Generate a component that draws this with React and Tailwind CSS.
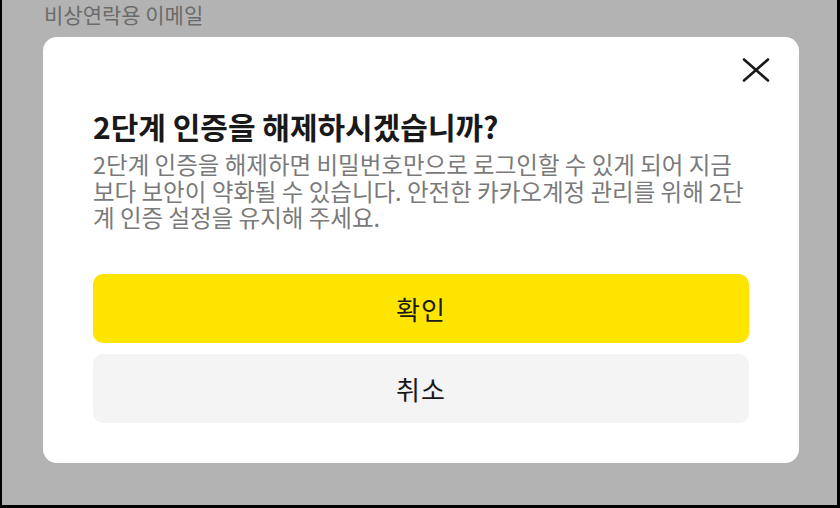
export default function App() {
  const font = { fontFamily: '"Noto Sans CJK KR", "Noto Sans", sans-serif' };
  return (
    <div className="w-[840px] h-[508px] bg-black pl-[2px] pr-[3px] pb-[3px]" style={font}>
      <div className="relative h-full w-full bg-[#b3b3b3]">
        <div className="pl-[42px] pt-[1px] text-[21px] leading-[26px] text-[#6b6b6b]">비상연락용 이메일</div>
        <div className="absolute left-[41px] top-[37px] w-[756px] h-[426px] rounded-[14px] bg-white px-[50px] pt-[70px] flex flex-col">
          <button className="absolute right-[29px] top-[21px] w-[28px] h-[24px] flex items-center justify-center">
            <svg width="28" height="24" viewBox="0 0 28 24" fill="none" stroke="#1a1a1a" strokeWidth="2.6" strokeLinecap="round">
              <line x1="2" y1="1.5" x2="26" y2="22.5" />
              <line x1="26" y1="1.5" x2="2" y2="22.5" />
            </svg>
          </button>
          <h2 className="text-[30px] leading-[38px] font-bold text-[#191919]">2단계 인증을 해제하시겠습니까?</h2>
          <p className="mt-[6px] text-[23.5px] leading-[26.5px] text-[#7a7a7a]">
            2단계 인증을 해제하면 비밀번호만으로 로그인할 수 있게 되어 지금 보다 보안이 약화될 수 있습니다. 안전한 카카오계정 관리를 위해 2단계 인증 설정을 유지해 주세요.
          </p>
          <div className="mt-auto mb-[40px] flex flex-col gap-[11px]">
            <button className="h-[69px] w-full rounded-[10px] bg-[#fee500] text-[26px] tracking-[1px] text-[#191919]">확인</button>
            <button className="h-[69px] w-full rounded-[10px] bg-[#f4f4f4] text-[26px] tracking-[1px] text-[#191919]">취소</button>
          </div>
        </div>
      </div>
    </div>
  );
}
